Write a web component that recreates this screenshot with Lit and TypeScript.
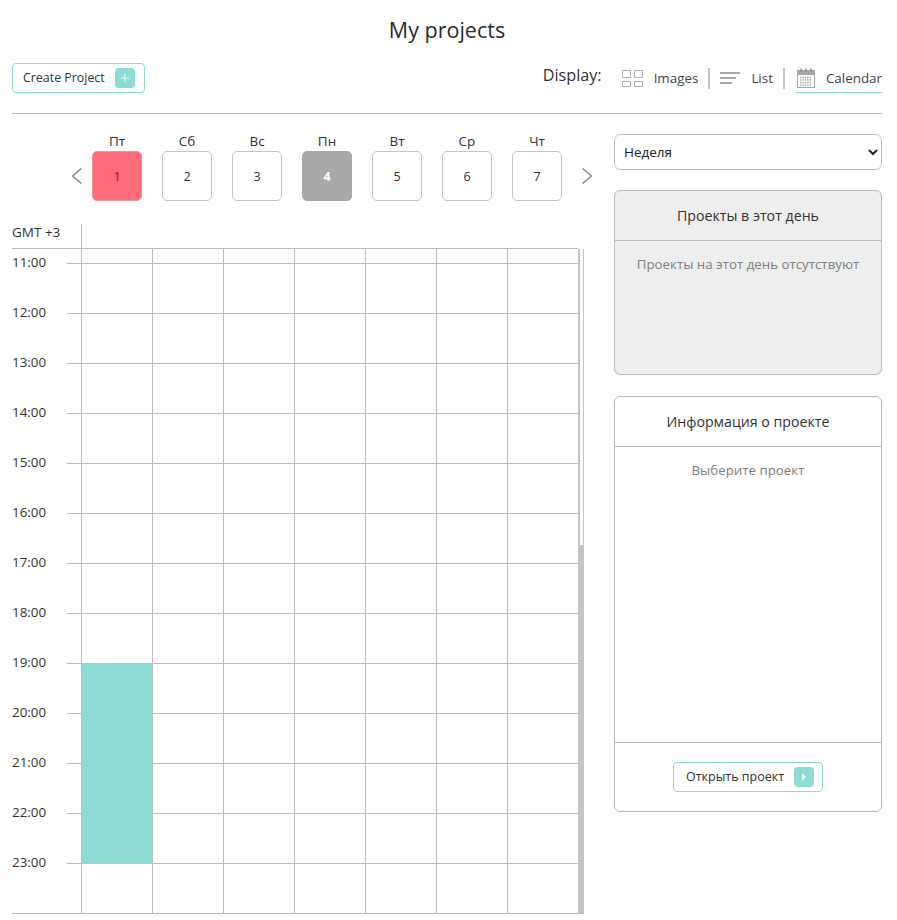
import { LitElement, html, css } from 'lit';
import { customElement } from 'lit/decorators.js';

const DAYS = [
  { name: 'Пт', num: 1, kind: 'busy' },
  { name: 'Сб', num: 2, kind: '' },
  { name: 'Вс', num: 3, kind: '' },
  { name: 'Пн', num: 4, kind: 'today' },
  { name: 'Вт', num: 5, kind: '' },
  { name: 'Ср', num: 6, kind: '' },
  { name: 'Чт', num: 7, kind: '' },
];
const HOURS = ['11:00', '12:00', '13:00', '14:00', '15:00', '16:00', '17:00', '18:00', '19:00', '20:00', '21:00', '22:00', '23:00'];

@customElement('app-root')
export class AppRoot extends LitElement {
  static styles = css`
    :host {
      display: block;
      width: 897px;
      height: 920px;
      overflow: hidden;
      background: #fff;
      color: #333;
      font-family: 'Open Sans', sans-serif;
      font-size: 13px;
    }
    .page { padding: 0 15px 0 12px; }
    h1 {
      margin: 0;
      height: 63px;
      padding-top: 15px;
      box-sizing: border-box;
      text-align: center;
      font-size: 21.5px;
      line-height: 30px;
      font-weight: 400;
      color: #2b2b2b;
    }
    .toolbar {
      display: flex;
      justify-content: space-between;
      align-items: flex-start;
      height: 50px;
      border-bottom: 1px solid #bdbdbd;
    }
    .btn {
      display: inline-flex;
      align-items: center;
      justify-content: space-between;
      box-sizing: border-box;
      height: 30px;
      border: 1px solid #8ddcd4;
      border-radius: 4px;
      background: #fff;
      padding: 0 9px 0 10px;
      font: inherit;
      font-size: 12.4px;
      color: #333;
    }
    .btn.create { width: 133px; }
    .btn.open { width: 150px; padding: 0 8px 0 12px; font-size: 12.5px; }
    .btn-label { margin-bottom: 2px; }
    .btn-icon {
      width: 20px;
      height: 20px;
      border-radius: 4px;
      background: #8ddcd4;
      display: flex;
      align-items: center;
      justify-content: center;
    }
    .display {
      display: flex;
      align-items: center;
      height: 30px;
    }
    .display-label {
      font-size: 16.2px;
      margin-right: 20px;
      color: #333;
      position: relative;
      top: -3px;
    }
    .mode {
      display: flex;
      align-items: center;
      height: 30px;
      font-size: 13.4px;
      color: #444;
    }
    .mode svg { margin-right: 10px; flex: none; }
    .mode.images svg { margin-right: 11px; }
    .mode.calendar {
      border-bottom: 1px solid #8ddcd4;
      box-sizing: border-box;
      margin-left: 11px;
      padding-left: 1px;
    }
    .sep {
      width: 2px;
      height: 21px;
      background: #c4c4c4;
      margin: 0 10px;
    }
    .sep.last { margin-right: 0; }
    .main {
      display: flex;
      justify-content: space-between;
      align-items: flex-start;
    }
    .schedule { width: 572px; }
    .strip {
      display: flex;
      align-items: flex-end;
      height: 87px;
      padding-left: 59px;
    }
    .arrow {
      flex: none;
      width: 21px;
      height: 50px;
      display: flex;
      align-items: center;
    }
    .arrow.next { margin-left: 19px; }
    .days { display: flex; gap: 20px; flex: none; }
    .day { width: 50px; text-align: center; }
    .day-name { font-size: 13.5px; line-height: 18px; height: 19px; color: #333; }
    .day-num {
      box-sizing: border-box;
      width: 50px;
      height: 50px;
      border: 1px solid #c4c4c4;
      border-radius: 5px;
      display: flex;
      align-items: center;
      justify-content: center;
      font-size: 12.5px;
      color: #333;
    }
    .day-num.busy { background: #ff6b78; border-color: #e8959c; color: #6e2a30; }
    .day-num.today { background: #a9a9a9; border-color: #a9a9a9; color: #fff; font-weight: 700; }
    .grid-head {
      display: flex;
      height: 48px;
      box-sizing: border-box;
      padding-top: 23px;
      border-bottom: 1px solid #bdbdbd;
      width: 566px;
    }
    .gmt {
      width: 70px;
      height: 24px;
      font-size: 13.5px;
      line-height: 17px;
      box-sizing: border-box;
      border-right: 1px solid #bdbdbd;
      flex: none;
    }
    .grid { display: flex; height: 664px; border-bottom: 1px solid #bdbdbd; }
    .times { width: 69px; flex: none; padding-top: 3px; box-sizing: border-box; }
    .time {
      height: 50px;
      line-height: 20px;
      font-size: 13.4px;
      color: #333;
      position: relative;
    }
    .time::after {
      content: '';
      position: absolute;
      left: 55px;
      right: 0;
      top: 11px;
      border-top: 1px solid #bdbdbd;
    }
    .col {
      width: 71px;
      box-sizing: border-box;
      border-left: 1px solid #bdbdbd;
      position: relative;
      padding-top: 14px;
    }
    .cell { height: 50px; box-sizing: border-box; border-top: 1px solid #bdbdbd; }
    .event {
      position: absolute;
      left: 0;
      right: 0;
      top: 414px;
      height: 201px;
      background: #8ddcd4;
    }
    .scrollbar {
      width: 6px;
      box-sizing: border-box;
      border: solid #c4c4c4;
      border-width: 0 1px 0 2px;
      flex: none;
      display: flex;
      flex-direction: column;
      justify-content: flex-end;
    }
    .thumb { margin: 0 -1px 0 -2px; height: 368px; background: #c4c4c4; }
    aside { width: 268px; padding-top: 20px; }
    select {
      display: block;
      width: 268px;
      height: 36px;
      border: 1px solid #bdbdbd;
      border-radius: 6px;
      background: #fff;
      padding: 0 4px 0 5px;
      font: inherit;
      font-size: 13.5px;
      color: #222;
    }
    .panel {
      box-sizing: border-box;
      border: 1px solid #bdbdbd;
      border-radius: 6px;
      display: flex;
      flex-direction: column;
      text-align: center;
    }
    .panel.projects { height: 185px; margin-top: 20px; background: #eee; }
    .panel.info { height: 416px; margin-top: 21px; }
    .panel-title {
      height: 50px;
      flex: none;
      box-sizing: border-box;
      border-bottom: 1px solid #bdbdbd;
      font-size: 14.2px;
      line-height: 50px;
      color: #333;
    }
    .panel-body {
      flex: 1;
      padding-top: 14px;
      font-size: 13.3px;
      line-height: 18px;
      color: #808080;
    }
    .panel-foot {
      height: 69px;
      flex: none;
      box-sizing: border-box;
      border-top: 1px solid #bdbdbd;
      display: flex;
      align-items: center;
      justify-content: center;
    }
  `;

  renderChevron(flip: boolean) {
    return html`<svg width="12" height="18" viewBox="0 0 12 18" fill="none" stroke="#7a7a7a" stroke-width="1.2">
      <path d=${flip ? 'M1.5 1.5L10.5 9L1.5 16.5' : 'M10.5 1.5L1.5 9L10.5 16.5'}></path>
    </svg>`;
  }

  render() {
    return html`
      <div class="page">
        <h1>My projects</h1>
        <div class="toolbar">
          <button class="btn create">
            <span class="btn-label">Create Project</span>
            <span class="btn-icon">
              <svg width="10" height="10" viewBox="0 0 10 10" stroke="#fff" stroke-width="1.2" opacity="0.7"><path d="M5 0.5V9.5M0.5 5H9.5"></path></svg>
            </span>
          </button>
          <div class="display">
            <span class="display-label">Display:</span>
            <span class="mode images">
              <svg width="21" height="17" viewBox="0 0 21 17" fill="none" stroke="#b5b5b5">
                <rect x="0.5" y="0.5" width="8" height="7"></rect>
                <rect x="12.5" y="0.5" width="8" height="7"></rect>
                <rect x="0.5" y="11.5" width="8" height="5"></rect>
                <rect x="12.5" y="11.5" width="8" height="5"></rect>
              </svg>
              Images
            </span>
            <span class="sep"></span>
            <span class="mode list">
              <svg width="21" height="14" viewBox="0 0 21 14" stroke="#a8a8a8" stroke-width="2">
                <path d="M0 2H20M0 7H16M0 12H12"></path>
              </svg>
              List
            </span>
            <span class="sep last"></span>
            <span class="mode calendar">
              <svg width="19" height="20" viewBox="0 0 19 20" fill="none">
                <rect x="0.5" y="2.5" width="17" height="17" fill="#fff" stroke="#a8a8a8"></rect>
                <rect x="1" y="3" width="16" height="4" fill="#a8a8a8"></rect>
                <path d="M4 0.5V4M9 0.5V4M14 0.5V4" stroke="#8f8f8f" stroke-width="1.5"></path>
                <path d="M3 9.5H15M3 12H15M3 14.5H15M3 17H15" stroke="#a8a8a8" stroke-width="1.3" stroke-dasharray="1.4 1"></path>
              </svg>
              Calendar
            </span>
          </div>
        </div>
        <div class="main">
          <section class="schedule">
            <div class="strip">
              <span class="arrow">${this.renderChevron(false)}</span>
              <div class="days">
                ${DAYS.map(d => html`
                  <div class="day">
                    <div class="day-name">${d.name}</div>
                    <div class="day-num ${d.kind}">${d.num}</div>
                  </div>
                `)}
              </div>
              <span class="arrow next">${this.renderChevron(true)}</span>
            </div>
            <div class="grid-head"><div class="gmt">GMT +3</div></div>
            <div class="grid">
              <div class="times">
                ${HOURS.map(h => html`<div class="time">${h}</div>`)}
              </div>
              ${DAYS.map((d, i) => html`
                <div class="col">
                  ${HOURS.map(() => html`<div class="cell"></div>`)}
                  ${i === 0 ? html`<div class="event"></div>` : ''}
                </div>
              `)}
              <div class="scrollbar"><div class="thumb"></div></div>
            </div>
          </section>
          <aside>
            <select>
              <option>Неделя</option>
              <option>Месяц</option>
            </select>
            <div class="panel projects">
              <div class="panel-title">Проекты в этот день</div>
              <div class="panel-body">Проекты на этот день отсутствуют</div>
            </div>
            <div class="panel info">
              <div class="panel-title">Информация о проекте</div>
              <div class="panel-body">Выберите проект</div>
              <div class="panel-foot">
                <button class="btn open">
                  <span class="btn-label">Открыть проект</span>
                  <span class="btn-icon">
                    <svg width="6" height="10" viewBox="0 0 6 10" fill="#fff" opacity="0.85"><path d="M1 1L5 5L1 9Z"></path></svg>
                  </span>
                </button>
              </div>
            </div>
          </aside>
        </div>
      </div>
    `;
  }
}
